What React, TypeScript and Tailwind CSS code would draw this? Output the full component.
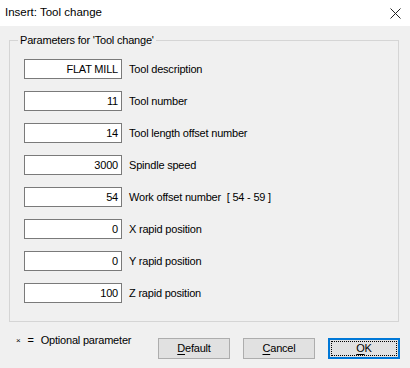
import React from "react";

interface ParamRowProps {
    value: string;
    label: string;
}

const rows: ParamRowProps[] = [
    { value: "FLAT MILL", label: "Tool description" },
    { value: "11", label: "Tool number" },
    { value: "14", label: "Tool length offset number" },
    { value: "3000", label: "Spindle speed" },
    { value: "54", label: "Work offset number  [ 54 - 59 ]" },
    { value: "0", label: "X rapid position" },
    { value: "0", label: "Y rapid position" },
    { value: "100", label: "Z rapid position" },
];

const ParamRow = ({ value, label }: ParamRowProps) => {
    return (
        <div className="flex items-center h-[20px]">
            <div className="w-[98px] h-[20px] bg-white border border-[#7a7a7a] flex items-center justify-end pr-[3px] leading-none">
                {value}
            </div>
            <span className="ml-[7px] whitespace-pre leading-none">{label}</span>
        </div>
    );
};

const DlgButton = ({ first, rest, focused }: { first: string; rest: string; focused?: boolean }) => {
    return (
        <button
            className={`w-[72px] h-[21px] bg-[#e1e1e1] flex items-center justify-center leading-none text-black ${
                focused ? "border-2 border-[#0078d7] p-[1px]" : "border border-[#adadad]"
            }`}
        >
            {focused ? (
                <span className="w-full h-full border border-dotted border-black flex items-center justify-center">
                    <span className="underline underline-offset-2">{first}</span>
                    {rest}
                </span>
            ) : (
                <span>
                    <span className="underline underline-offset-2">{first}</span>
                    {rest}
                </span>
            )}
        </button>
    );
};

export default function App() {
    return (
        <div className="w-[410px] h-[368px] bg-[#f0f0f0] flex flex-col text-[11px] text-black tracking-[-0.2px] font-['Liberation_Sans',Arial,sans-serif]">
            {/* title bar */}
            <div className="h-[26px] bg-white flex items-center justify-between pl-[5px] pr-[10px] shrink-0">
                <span className="text-[11.5px] tracking-normal">Insert: Tool change</span>
                <svg width="11" height="11" viewBox="0 0 11 11" className="mr-[-1px]">
                    <path d="M0.5 0.5 L10.5 10.5 M10.5 0.5 L0.5 10.5" stroke="#222" strokeWidth="1" fill="none" />
                </svg>
            </div>

            {/* parameters group */}
            <fieldset className="ml-[9px] mr-[11px] mt-[7px] h-[289px] border border-[#d5d5d5] pl-[14px] pt-[12px]">
                <legend className="ml-[-6px] px-[2px] leading-[14px]">Parameters for 'Tool change'</legend>
                <div className="flex flex-col gap-[12px]">
                    {rows.map((r, i) => (
                        <ParamRow key={i} value={r.value} label={r.label} />
                    ))}
                </div>
            </fieldset>

            {/* footer */}
            <div className="flex items-start mt-[12px] pl-[16px] pr-[10px]">
                <span className="mt-[1px] flex items-center leading-none">
                    <span className="text-[8px] mr-[7px]">×</span>
                    <span className="mr-[7px]">=</span>
                    <span>Optional parameter</span>
                </span>
                <div className="ml-auto flex gap-[13px] mt-[4px]">
                    <DlgButton first="D" rest="efault" />
                    <DlgButton first="C" rest="ancel" />
                    <DlgButton first="O" rest="K" focused />
                </div>
            </div>
        </div>
    );
}
